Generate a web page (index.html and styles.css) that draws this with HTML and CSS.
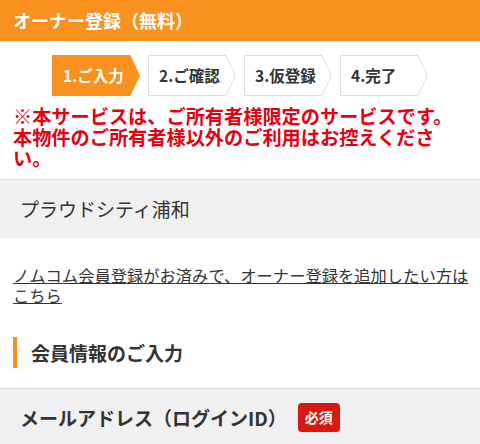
FILE: index.html
```html
<!DOCTYPE html>
<html lang="ja">
<head>
  <meta charset="UTF-8">
  <title>オーナー登録（無料）</title>
  <link rel="stylesheet" href="styles.css">
</head>
<body>

  <header class="page-head">オーナー登録（無料）</header>

  <ol class="steps">
    <li class="step current">
      <svg class="step-bg" viewBox="0 0 88 41" preserveAspectRatio="none"><polygon points="0.5,0.5 78,0.5 87.5,20.5 78,40.5 0.5,40.5"/></svg>
      <span>1.ご入力</span>
    </li>
    <li class="step">
      <svg class="step-bg" viewBox="0 0 88 41" preserveAspectRatio="none"><polygon points="0.5,0.5 78,0.5 87.5,20.5 78,40.5 0.5,40.5"/></svg>
      <span>2.ご確認</span>
    </li>
    <li class="step">
      <svg class="step-bg" viewBox="0 0 88 41" preserveAspectRatio="none"><polygon points="0.5,0.5 78,0.5 87.5,20.5 78,40.5 0.5,40.5"/></svg>
      <span>3.仮登録</span>
    </li>
    <li class="step">
      <svg class="step-bg" viewBox="0 0 88 41" preserveAspectRatio="none"><polygon points="0.5,0.5 78,0.5 87.5,20.5 78,40.5 0.5,40.5"/></svg>
      <span>4.完了</span>
    </li>
  </ol>

  <p class="notice">※本サービスは、ご所有者様限定のサービスです。本物件のご所有者様以外のご利用はお控えください。</p>

  <div class="property">プラウドシティ浦和</div>

  <p class="member-link"><a href="#">ノムコム会員登録がお済みで、オーナー登録を追加したい方はこちら</a></p>

  <h2 class="section-title">会員情報のご入力</h2>

  <div class="field-head">
    <span>メールアドレス（ログインID）</span>
    <span class="required">必須</span>
  </div>

</body>
</html>
```

FILE: styles.css
```css
body {
  margin: 0;
  font-family: "Noto Sans CJK JP", "Noto Sans", sans-serif;
  color: #333;
  background: #fff;
}
.page-head {
  height: 41px;
  line-height: 41px;
  padding-left: 13px;
  background: #f8911f;
  color: #fff;
  font-size: 18px;
  font-weight: bold;
}
.steps {
  display: flex;
  justify-content: center;
  gap: 8px;
  list-style: none;
  margin: 14px 0 0;
  padding: 0;
}
.step {
  position: relative;
  width: 88px;
  height: 41px;
  line-height: 41px;
  padding-left: 11px;
  box-sizing: border-box;
  font-size: 15.5px;
  font-weight: bold;
  color: #333;
}
.step span {
  position: relative;
}
.step-bg {
  position: absolute;
  left: 0;
  top: 0;
  width: 100%;
  height: 100%;
}
.step-bg polygon {
  fill: #fff;
  stroke: #dcdcdc;
  stroke-width: 1;
}
.step.current {
  color: #fff;
}
.step.current polygon {
  fill: #f8911f;
  stroke: #f8911f;
}
.notice {
  margin: 10px 13px 0;
  color: #e60012;
  font-size: 19.2px;
  font-weight: bold;
  line-height: 21px;
}
.property {
  margin-top: 10px;
  height: 58px;
  line-height: 58px;
  padding: 0 20px;
  border-top: 1px solid #dcdcdc;
  background: #f0f0f0;
  font-size: 19px;
}
.member-link {
  margin: 28px 0 0 13px;
  font-size: 16.3px;
  line-height: 19.5px;
}
.member-link a {
  color: #333;
}
.section-title {
  margin: 32px 13px 0;
  padding-left: 14px;
  border-left: 4px solid #f8911f;
  font-size: 19px;
  line-height: 31px;
}
.field-head {
  display: flex;
  align-items: center;
  gap: 11px;
  margin-top: 20px;
  height: 57px;
  padding: 0 20px;
  border-top: 1px solid #dcdcdc;
  background: #f0f0f0;
  font-size: 19px;
  font-weight: bold;
}
.required {
  width: 42px;
  height: 29px;
  line-height: 29px;
  text-align: center;
  border-radius: 4px;
  background: #d9190f;
  color: #fff;
  font-size: 14px;
}
```
